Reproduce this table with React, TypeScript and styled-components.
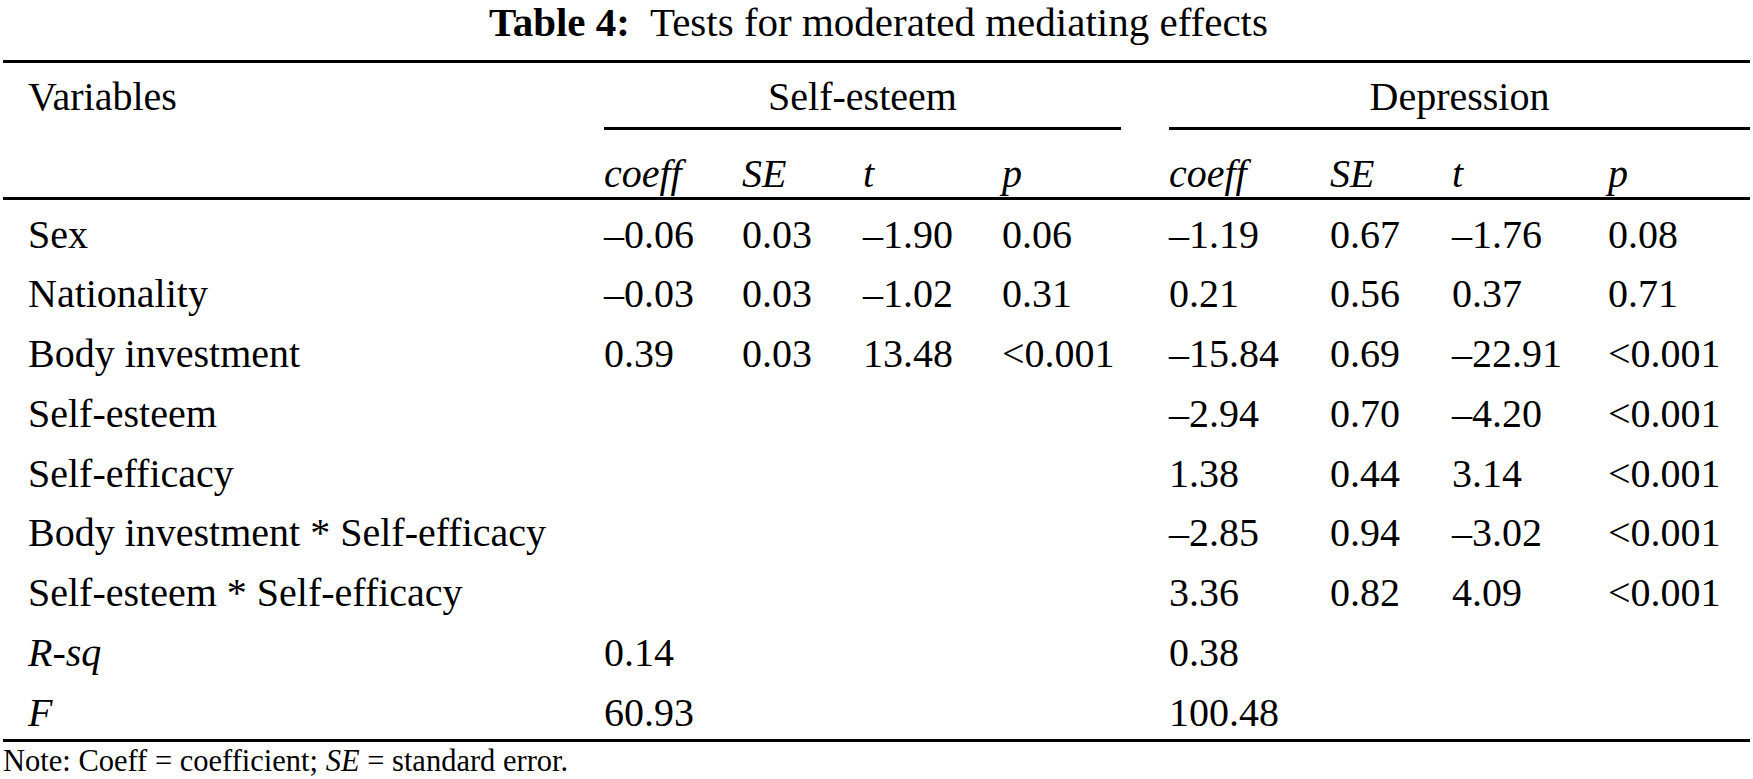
import React from 'react';
import styled, { createGlobalStyle } from 'styled-components';

const COLUMNS = '601px 138px 121px 139px 167px 161px 122px 156px 142px';
const SERIF = '"Liberation Serif", "Times New Roman", Times, serif';

interface RowData {
    label: string;
    italic?: boolean;
    values: string[];
}

// 8 slots: self-esteem (coeff, SE, t, p) then depression (coeff, SE, t, p)
const rows: RowData[] = [
    { label: 'Sex', values: ['–0.06', '0.03', '–1.90', '0.06', '–1.19', '0.67', '–1.76', '0.08'] },
    { label: 'Nationality', values: ['–0.03', '0.03', '–1.02', '0.31', '0.21', '0.56', '0.37', '0.71'] },
    { label: 'Body investment', values: ['0.39', '0.03', '13.48', '<0.001', '–15.84', '0.69', '–22.91', '<0.001'] },
    { label: 'Self-esteem', values: ['', '', '', '', '–2.94', '0.70', '–4.20', '<0.001'] },
    { label: 'Self-efficacy', values: ['', '', '', '', '1.38', '0.44', '3.14', '<0.001'] },
    { label: 'Body investment * Self-efficacy', values: ['', '', '', '', '–2.85', '0.94', '–3.02', '<0.001'] },
    { label: 'Self-esteem * Self-efficacy', values: ['', '', '', '', '3.36', '0.82', '4.09', '<0.001'] },
    { label: 'R-sq', italic: true, values: ['0.14', '', '', '', '0.38', '', '', ''] },
    { label: 'F', italic: true, values: ['60.93', '', '', '', '100.48', '', '', ''] },
];

const statHeads = ['coeff', 'SE', 't', 'p', 'coeff', 'SE', 't', 'p'];

const App: React.FC = () => {
    return (
        <>
            <GlobalStyle />
            <Page>
                <Caption>
                    <CaptionLabel>Table 4:</CaptionLabel>
                    <CaptionText>Tests for moderated mediating effects</CaptionText>
                </Caption>
                <Table>
                    <GroupRow>
                        <HeadLabel>Variables</HeadLabel>
                        <GroupCell span={4} gapRight={48}>Self-esteem</GroupCell>
                        <GroupCell span={4} gapRight={0}>Depression</GroupCell>
                    </GroupRow>
                    <StatRow>
                        <HeadLabel />
                        {statHeads.map((h, i) => (
                            <StatCell key={i}>{h}</StatCell>
                        ))}
                    </StatRow>
                    <Body>
                        {rows.map((row) => (
                            <Row key={row.label}>
                                <LabelCell italic={row.italic}>{row.label}</LabelCell>
                                {row.values.map((v, i) => (
                                    <Cell key={i}>{v}</Cell>
                                ))}
                            </Row>
                        ))}
                    </Body>
                </Table>
                <Note>
                    Note: Coeff = coefficient; <i>SE</i> = standard error.
                </Note>
            </Page>
        </>
    );
};
export default App;

const GlobalStyle = createGlobalStyle`
    html, body {
        margin: 0;
        padding: 0;
        background: #ffffff;
    }
    body {
        font-family: ${SERIF};
        color: #000000;
    }
`;

const Page = styled.div`
    width: 1753px;
    height: 779px;
    overflow: hidden;
    background: #ffffff;
    font-family: ${SERIF};
`;

const Caption = styled.div`
    height: 60px;
    display: flex;
    justify-content: center;
    align-items: flex-start;
    font-family: ${SERIF};
    font-size: 41px;
    line-height: 44px;
    padding-left: 4px;
    box-sizing: border-box;
`;

const CaptionLabel = styled.span`
    font-weight: bold;
`;

const CaptionText = styled.span`
    margin-left: 20px;
`;

const Table = styled.div`
    margin-left: 3px;
    width: 1747px;
    border-top: 3px solid #000;
    border-bottom: 3px solid #000;
    font-family: ${SERIF};
    font-size: 40px;
`;

const GroupRow = styled.div`
    display: grid;
    grid-template-columns: ${COLUMNS};
    height: 67px;
    align-items: end;
    line-height: 44px;
`;

const GroupCell = styled.div<{ span: number; gapRight: number }>`
    grid-column: span ${props => props.span};
    margin-right: ${props => props.gapRight}px;
    text-align: center;
    border-bottom: 3px solid #000;
    padding-bottom: 8px;
`;

const HeadLabel = styled.div`
    padding-left: 25px;
    padding-bottom: 11px;
    white-space: nowrap;
`;

const StatRow = styled.div`
    display: grid;
    grid-template-columns: ${COLUMNS};
    height: 70px;
    align-items: end;
    line-height: 44px;
    border-bottom: 3px solid #000;
    box-sizing: border-box;
    padding-bottom: 1px;
`;

const StatCell = styled.div`
    font-style: italic;
    white-space: nowrap;
`;

const Body = styled.div`
    height: 539px;
    box-sizing: border-box;
    padding-top: 4.5px;
`;

const Row = styled.div`
    display: grid;
    grid-template-columns: ${COLUMNS};
    height: 59.8px;
    line-height: 59.8px;
`;

const LabelCell = styled.div<{ italic?: boolean }>`
    padding-left: 25px;
    white-space: nowrap;
    font-style: ${props => (props.italic ? 'italic' : 'normal')};
`;

const Cell = styled.div`
    white-space: nowrap;
`;

const Note = styled.div`
    margin-left: 3px;
    padding-top: 4px;
    font-family: ${SERIF};
    font-size: 30.5px;
    line-height: 30px;
`;
